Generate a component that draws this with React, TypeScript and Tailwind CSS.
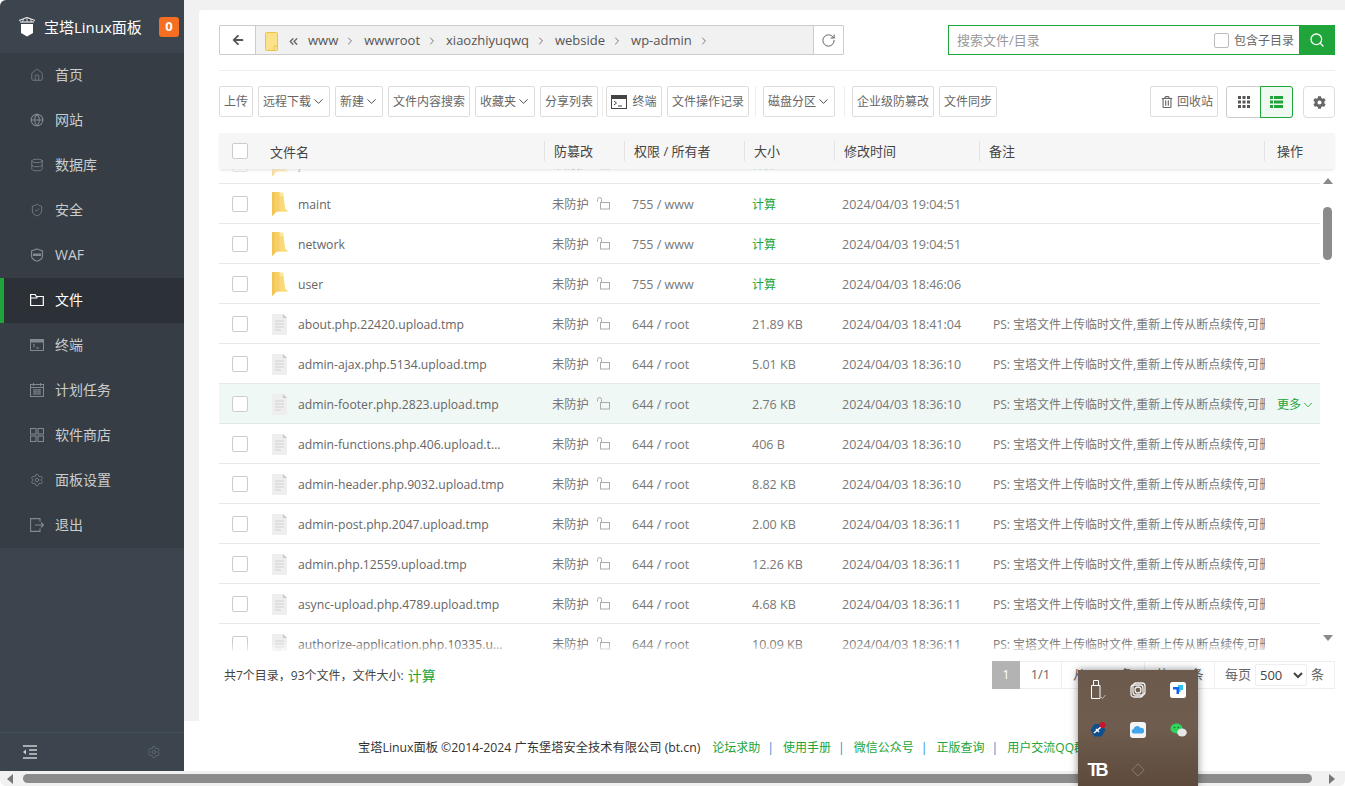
import React from "react";
import { ChevronDown, ChevronRight, ChevronsLeft, RotateCw, Search, Settings, House, Database, ShieldCheck, Globe } from "lucide-react";
import { FaArrowLeft, FaCog, FaRegTrashAlt } from "react-icons/fa";

const FONT = "font-['Open_Sans','Noto_Sans_CJK_SC',sans-serif]";

function FolderIcon({ className = "" }: { className?: string }) {
  return (
    <svg viewBox="0 0 16 24" className={className}>
      <path d="M6 0.500h4.500l1 1.500 1.500 14.500 3 3H4V2z" fill="#fde596" />
      <path d="M6 4l5 0 2 12.500 3 3H6z" fill="#fad97c" />
      <path d="M0 0h7.500v19.500H5L0 24z" fill="#f6cf68" />
      <path d="M0 0h2.500v21.500L0 24z" fill="#f1c555" />
    </svg>
  );
}

function FileIcon({ className = "" }: { className?: string }) {
  return (
    <svg viewBox="0 0 15 21" className={className}>
      <path d="M0 0h11l4 4v17H0z" fill="#eeeeee" />
      <path d="M11 0l4 4h-4z" fill="#c8c8c8" />
      <path d="M3 7h9M3 10h9M3 13h9M3 16h6" stroke="#d2d2d2" strokeWidth="1" />
    </svg>
  );
}

function LockOpen() {
  return (
    <svg viewBox="0 0 13 13" className="w-[13px] h-[13px]" fill="none" stroke="#aaa" strokeWidth="1">
      <rect x="3.500" y="5.500" width="9" height="6.500" />
      <path d="M0.500 4.500V2.500a2 2 0 0 1 4 0V5.500" />
    </svg>
  );
}

function Check({ cls = "" }: { cls?: string }) {
  return <span className={`block w-4 h-4 border border-[#ccc] rounded-[2px] bg-white ${cls}`} />;
}

const ICN = { width: 14, height: 14, strokeWidth: 1.3 };

const MenuIcons: Record<string, React.ReactNode> = {
  home: <House {...ICN} />,
  web: <Globe width={14} height={14} strokeWidth={1.8} />,
  db: <Database {...ICN} />,
  sec: <ShieldCheck {...ICN} />,
  waf: (
    <svg viewBox="0 0 14 14" width="14" height="14" fill="none" stroke="currentColor" strokeWidth="1.200">
      <path d="M7 1l5.500 2v5c0 2.500-2.500 4.200-5.500 5.200C4 12.200 1.500 10.500 1.500 8V3z" />
      <path d="M3.500 6h7v1.500h-7z" fill="currentColor" />
    </svg>
  ),
  file: (
    <svg viewBox="0 0 14 14" width="14" height="14" fill="none" stroke="currentColor" strokeWidth="1.200">
      <path d="M.6 12.500V1.500h4.500l1.200 2h7v9z" />
      <path d="M.6 5h6l1-1.500" />
    </svg>
  ),
  term: (
    <svg viewBox="0 0 14 14" width="14" height="14" fill="none" stroke="currentColor" strokeWidth="1">
      <rect x=".5" y="1.500" width="13" height="11" />
      <path d="M.5 1.500h13v2.500H.5z" fill="currentColor" />
      <path d="M3 6l2 1.500L3 9M6 10h3" />
    </svg>
  ),
  cron: (
    <svg viewBox="0 0 14 14" width="14" height="14" fill="none" stroke="currentColor" strokeWidth="1">
      <rect x=".5" y="1.500" width="13" height="12" />
      <path d="M3.500 0v3M10.500 0v3M.5 4.500h13M3 7h8M3 9h8M3 11h8" />
      <path d="M5 6v6M9 6v6" strokeDasharray="1 1" />
    </svg>
  ),
  soft: (
    <svg viewBox="0 0 14 14" width="14" height="14" fill="none" stroke="currentColor" strokeWidth="1.100">
      <rect x=".5" y=".5" width="5.500" height="5.500" />
      <rect x="8" y=".5" width="5.500" height="5.500" />
      <rect x=".5" y="8" width="5.500" height="5.500" />
      <rect x="8" y="8" width="5.500" height="5.500" />
    </svg>
  ),
  conf: <Settings {...ICN} />,
  exit: (
    <svg viewBox="0 0 14 14" width="14" height="14" fill="none" stroke="currentColor" strokeWidth="1.100">
      <path d="M10 3.500V.6H.6v12.800H10v-2.900" />
      <path d="M5 7h8.500M11 4.500L13.500 7 11 9.500" />
    </svg>
  ),
};

const MENU = [
  ["home", "首页"],
  ["web", "网站"],
  ["db", "数据库"],
  ["sec", "安全"],
  ["waf", "WAF"],
  ["file", "文件"],
  ["term", "终端"],
  ["cron", "计划任务"],
  ["soft", "软件商店"],
  ["conf", "面板设置"],
  ["exit", "退出"],
];

function Sidebar() {
  return (
    <aside className="w-[184px] shrink-0 h-full bg-[#3c444d] flex flex-col rounded-tl-[6px]">
      <div className="h-[53px] flex items-center pl-[18px] pr-[5px]">
        <svg viewBox="0 0 18 20" className="w-[18px] h-[20px] shrink-0">
          <path d="M1 3.500L9 .5l8 3" fill="none" stroke="#e8e8e8" strokeWidth="1.200" />
          <path d="M5.500 2l-1 3M9 1v4M12.500 2l1 3" stroke="#d0d0d0" strokeWidth="1" />
          <path d="M2 5h14" stroke="#e8e8e8" strokeWidth="1.200" />
          <path d="M3 7h12v9l-6 3.500L3 16z" fill="#ffffff" />
        </svg>
        <span className="ml-2 text-[15px] leading-5 text-white whitespace-nowrap">宝塔Linux面板</span>
        <span className="ml-auto w-5 h-5 rounded-[3px] bg-[#f56e21] text-white font-bold text-[13px] flex items-center justify-center">0</span>
      </div>
      <nav className="bg-[#363d44]">
        {MENU.map(([k, label]) => {
          const on = k === "file";
          return (
            <div key={k} className={`h-[45px] pb-[2px] flex items-center text-[14px] ${on ? "bg-[#2c3138] border-l-4 border-[#20a53a] pl-[26px] text-white" : "pl-[30px] text-[#c9cdd0]"}`}>
              <span className={`w-[14px] h-[14px] flex items-center justify-center ${on ? "text-white" : "text-[#828a90]"}`}>{MenuIcons[k]}</span>
              <span className="ml-[11px]">{label}</span>
            </div>
          );
        })}
      </nav>
      <div className="mt-auto h-[39px] border-t border-[#46505a] flex items-center justify-between pl-[23px] pr-[23px]">
        <svg viewBox="0 0 14 14" width="14" height="14" fill="none" stroke="#c9cdd0" strokeWidth="1.300">
          <path d="M0 1h14M6 5h8M6 9h8M0 13h14" />
          <path d="M0 7l3-2.500v5z" fill="#c9cdd0" stroke="none" />
        </svg>
        <Settings width={14} height={14} strokeWidth={1.2} className="text-[#69727a]" />
      </div>
    </aside>
  );
}

function PathBar() {
  const parts = ["www", "wwwroot", "xiaozhiyuqwq", "webside", "wp-admin"];
  return (
    <div className="w-[625px] h-[30px] border border-[#ccc] flex rounded-[1px] bg-white">
      <div className="w-[36px] flex items-center justify-center border-r border-[#ccc]">
        <FaArrowLeft size={12} className="text-[#555]" />
      </div>
      <div className="flex-1 bg-[#f1f1f1] flex items-center pl-[9px] pt-[2px] text-[13px] text-[#555]">
        <svg viewBox="0 0 13 19" className="w-[13px] h-[19px] shrink-0">
          <rect x=".5" y=".5" width="12" height="18" rx="1" fill="#fde08a" stroke="#eec14f" />
          <path d="M9 18v-4h3.500" fill="none" stroke="#eec14f" />
        </svg>
        <ChevronsLeft width={13} height={13} strokeWidth={2.500} className="ml-[9px] text-[#666]" />
        {parts.map((p) => (
          <React.Fragment key={p}>
            <span className="ml-[8px]">{p}</span>
            <ChevronRight width={12} height={12} strokeWidth={2} className="ml-[6px] text-[#777]" />
          </React.Fragment>
        ))}
      </div>
      <div className="w-[30px] flex items-center justify-center border-l border-[#ccc]">
        <RotateCw width={15} height={15} strokeWidth={1.500} className="text-[#555]" />
      </div>
    </div>
  );
}

function SearchBox() {
  return (
    <div className="w-[387px] h-[30px] border border-[#20a53a] flex items-center">
      <span className="ml-2 pt-[2px] text-[13px] text-[#999]">搜索文件/目录</span>
      <span className="ml-auto block w-[15px] h-[15px] border border-[#bbb] rounded-[2px]" />
      <span className="ml-[5px] pt-px text-[12px] text-[#666] whitespace-nowrap">包含子目录</span>
      <span className="ml-[5px] w-[36px] h-[30px] -mr-px bg-[#20a53a] flex items-center justify-center">
        <Search width={16} height={16} strokeWidth={2} className="text-white" />
      </span>
    </div>
  );
}

function Btn({ children, w, caret, cls = "" }: { children: React.ReactNode; w: string; caret?: boolean; cls?: string }) {
  return (
    <span className={`h-[31px] ${w} shrink-0 border border-[#ddd] rounded-[2px] flex items-center justify-center text-[12px] text-[#666] whitespace-nowrap bg-white ${cls}`}>
      {children}
      {caret && <ChevronDown width={15} height={15} strokeWidth={1.500} className="text-[#444] -mr-px" />}
    </span>
  );
}

function Toolbar() {
  return (
    <div className="mt-[15px] h-[32px] flex items-start">
      <div className="flex gap-[5px]">
        <Btn w="w-[34px]">上传</Btn>
        <Btn w="w-[72px]" caret>远程下载</Btn>
        <Btn w="w-[48px]" caret>新建</Btn>
        <Btn w="w-[82px]">文件内容搜索</Btn>
        <Btn w="w-[60px]" caret>收藏夹</Btn>
        <Btn w="w-[58px]">分享列表</Btn>
      </div>
      <span className="w-px h-[31px] bg-[#eee] mx-[3.500px]" />
      <Btn w="w-[56px]">
        <svg viewBox="0 0 16 14" className="w-4 h-[14px] mr-[5px]" fill="none" stroke="#444" strokeWidth="1">
          <rect x=".5" y=".5" width="15" height="13" />
          <path d="M.5 .5h15v3H.5z" fill="#444" />
          <path d="M3 6l2.500 2L3 10M7 11h4" />
        </svg>
        终端
      </Btn>
      <Btn w="w-[82px]" cls="ml-[5px]">文件操作记录</Btn>
      <span className="w-px h-[31px] bg-[#eee] ml-[5.500px] mr-[7.500px]" />
      <Btn w="w-[72px]" caret>磁盘分区</Btn>
      <span className="w-px h-[31px] bg-[#eee] ml-[8.500px] mr-[7.500px]" />
      <Btn w="w-[82px]">企业级防篡改</Btn>
      <Btn w="w-[58px]" cls="ml-[5px]">文件同步</Btn>

      <span className="ml-auto h-[31px] w-[68px] border border-[#ddd] rounded-[2px] flex items-center pl-[10px] text-[12px] text-[#666] whitespace-nowrap">
        <FaRegTrashAlt size={12} className="mr-[4px] text-[#666]" />
        回收站
      </span>
      <div className="ml-2 w-[67px] h-[32px] flex border border-[#ccc] rounded-[3px] bg-white">
        <span className="w-[33px] flex items-center justify-center">
          <svg viewBox="0 0 12 12" width="12" height="12" fill="#555">
            {[0, 4.5, 9].flatMap((x) => [0, 4.5, 9].map((y) => <rect key={`${x}-${y}`} x={x} y={y} width="3" height="3" />))}
          </svg>
        </span>
        <span className="flex-1 -my-px -mr-px flex items-center justify-center border border-[#20a53a] rounded-r-[3px] bg-[#f0f8f2]">
          <svg viewBox="0 0 13 12" width="13" height="12" fill="#20a53a">
            {[0, 4.5, 9].map((y) => (
              <React.Fragment key={y}>
                <rect x="0" y={y} width="3" height="3" />
                <rect x="4" y={y} width="9" height="3" />
              </React.Fragment>
            ))}
          </svg>
        </span>
      </div>
      <span className="ml-[10px] w-[32px] h-[32px] border border-[#ddd] rounded-[4px] flex items-center justify-center">
        <FaCog size={13} className="text-[#666]" />
      </span>
    </div>
  );
}

const HEAD = ["防篡改", "权限 / 所有者", "大小", "修改时间", "备注"];

function TableHead() {
  return (
    <div className="relative z-10 mt-[15px] h-[36px] bg-[#f6f6f6] grid grid-cols-[325px_80px_120px_90px_145px_285px_71px] items-center text-[13px] text-[#444] shadow-[0_2px_3px_-1px_rgba(0,0,0,0.12)]">
      <div className="flex items-center pl-[13px]">
        <Check />
        <span className="ml-[22px] h-5 pt-[1px] leading-5">文件名</span>
      </div>
      {HEAD.map((t) => (
        <div key={t} className="h-5 border-l border-[#e3e3e3] pl-[9px] leading-5 whitespace-nowrap">{t}</div>
      ))}
      <div className="h-5 border-l border-[#e3e3e3] pl-[12px] leading-5">操作</div>
    </div>
  );
}

const NOTE = "PS: 宝塔文件上传临时文件,重新上传从断点续传,可删除";
type Row = { n: string; dir?: boolean; p: string; s: string; t: string; hover?: boolean };
const ROWS: Row[] = [
  { n: "js", dir: true, p: "755 / www", s: "计算", t: "2024/04/03 19:04:51" },
  { n: "maint", dir: true, p: "755 / www", s: "计算", t: "2024/04/03 19:04:51" },
  { n: "network", dir: true, p: "755 / www", s: "计算", t: "2024/04/03 19:04:51" },
  { n: "user", dir: true, p: "755 / www", s: "计算", t: "2024/04/03 18:46:06" },
  { n: "about.php.22420.upload.tmp", p: "644 / root", s: "21.89 KB", t: "2024/04/03 18:41:04" },
  { n: "admin-ajax.php.5134.upload.tmp", p: "644 / root", s: "5.01 KB", t: "2024/04/03 18:36:10" },
  { n: "admin-footer.php.2823.upload.tmp", p: "644 / root", s: "2.76 KB", t: "2024/04/03 18:36:10", hover: true },
  { n: "admin-functions.php.406.upload.tmp", p: "644 / root", s: "406 B", t: "2024/04/03 18:36:10" },
  { n: "admin-header.php.9032.upload.tmp", p: "644 / root", s: "8.82 KB", t: "2024/04/03 18:36:10" },
  { n: "admin-post.php.2047.upload.tmp", p: "644 / root", s: "2.00 KB", t: "2024/04/03 18:36:11" },
  { n: "admin.php.12559.upload.tmp", p: "644 / root", s: "12.26 KB", t: "2024/04/03 18:36:11" },
  { n: "async-upload.php.4789.upload.tmp", p: "644 / root", s: "4.68 KB", t: "2024/04/03 18:36:11" },
  { n: "authorize-application.php.10335.upload.tmp", p: "644 / root", s: "10.09 KB", t: "2024/04/03 18:36:11" },
];

function FileRow({ r }: { r: Row }) {
  return (
    <div className={`h-[40px] pt-px grid grid-cols-[53px_26px_254px_80px_120px_90px_151px_272px_55px] items-center border-b text-[12.5px] text-[#777] ${r.hover ? "bg-[#eff8f5] border-[#dcebe6]" : "border-[#e8e8e8]"}`}>
      <div className="pl-[13px]"><Check /></div>
      <div>{r.dir ? <FolderIcon className="w-4 h-6" /> : <FileIcon className="w-[15px] h-[21px]" />}</div>
      <div className="w-[209px] pt-[2px] truncate text-[12.2px] text-[#666]">{r.n}</div>
      <div className="flex items-center">
        <span className="pt-[2px] text-[12.25px]">未防护</span>
        <span className="ml-[8px] -mt-px"><LockOpen /></span>
      </div>
      <div className="pt-[2px]">{r.p}</div>
      <div className={r.dir ? "pt-[2px] text-[12px] text-[#20a53a]" : "pt-[2px]"}>{r.s}</div>
      <div className="pt-[2px]">{r.t}</div>
      <div className="pt-[2px] pr-1 overflow-hidden whitespace-nowrap text-[12px]">{r.dir ? "" : NOTE}</div>
      <div className="pt-[2px] pl-[12px] text-[12px] text-[#20a53a] flex items-center whitespace-nowrap">
        {r.hover && (
          <>
            更多
            <ChevronDown width={14} height={14} strokeWidth={1.500} />
          </>
        )}
      </div>
    </div>
  );
}

function ScrollRail() {
  return (
    <div className="w-[15px] shrink-0 flex flex-col items-center">
      <span className="mt-[9px] w-0 h-0 border-x-[5px] border-x-transparent border-b-[6px] border-b-[#8a8a8a]" />
      <span className="mt-[23px] w-[9px] h-[53px] rounded-full bg-[#8b8b8b]" />
      <span className="mt-auto mb-[10px] w-0 h-0 border-x-[5px] border-x-transparent border-t-[6px] border-t-[#8a8a8a]" />
    </div>
  );
}

function FileList() {
  return (
    <div className="relative h-[482px] flex overflow-hidden">
      <div className="w-[1101px] overflow-hidden">
        <div className="-mt-[25px]">
          {ROWS.map((r) => <FileRow key={r.n} r={r} />)}
        </div>
      </div>
      <ScrollRail />
      <div className="absolute left-0 right-0 top-0 h-[10px] bg-gradient-to-b from-white/70 to-transparent" />
      <div className="absolute left-0 right-0 bottom-0 h-[8px] bg-gradient-to-t from-white/70 to-transparent" />
    </div>
  );
}

function Pager() {
  return (
    <div className="mt-[10px] flex items-start justify-between pl-[5px]">
      <div className="h-[28px] mt-px flex items-center text-[12px] text-[#444]">
        <span className="leading-[18px]">共7个目录，93个文件，文件大小:</span>
        <span className="ml-1 text-[14px] leading-[18px] text-[#20a53a]">计算</span>
      </div>
      <div className="h-[28px] flex border border-[#eee] text-[13px] text-[#666]">
        <span className="w-[28px] -my-px -ml-px bg-[#b3b3b3] text-white flex items-center justify-center">1</span>
        <span className="w-[42px] flex items-center justify-center border-r border-[#eee]">1/1</span>
        <span className="w-[83px] flex items-center justify-center border-r border-[#eee] whitespace-nowrap">从1-100条</span>
        <span className="w-[70px] flex items-center justify-center border-r border-[#eee] whitespace-nowrap">共100条</span>
        <span className="w-[119px] flex items-center justify-center whitespace-nowrap">
          每页
          <select defaultValue="500" className="mx-1 w-[52px] h-[22px] border border-[#eee] rounded-[2px] bg-white text-[13px] text-[#444]">
            <option value="500">500</option>
          </select>
          条
        </span>
      </div>
    </div>
  );
}

function Footer() {
  const links = ["论坛求助", "使用手册", "微信公众号", "正版查询", "用户交流QQ群"];
  return (
    <footer className="h-[50px] bg-white pl-[174px] flex items-start pt-[18px] text-[12.25px] leading-[18px] text-[#333] whitespace-nowrap">
      <span>宝塔Linux面板 ©2014-2024 广东堡塔安全技术有限公司 (bt.cn)</span>
      {links.map((l, i) => (
        <React.Fragment key={l}>
          <span className={i === 0 ? "ml-[12px] text-[12px] text-[#20a53a]" : "ml-[9px] text-[12px] text-[#20a53a]"}>{l}</span>
          {i < links.length - 1 && <span className="ml-[7px] text-[#2b8fd8]">|</span>}
        </React.Fragment>
      ))}
    </footer>
  );
}

function Tray() {
  return (
    <div className="absolute left-[1078px] top-[670px] w-[120px] h-[116px] bg-gradient-to-b from-[#6c5a4c] via-[#6e5c4e] to-[#5d4a3c] shadow-[0_0_8px_rgba(0,0,0,0.45)] grid grid-cols-3 auto-rows-[40px]">
      <div className="flex items-center justify-center">
        <svg viewBox="0 0 16 20" width="16" height="20" fill="none" stroke="#fff" strokeWidth="1">
          <path d="M3.500.5h5v5h-5zM1.500 5.500h8.500v13h-8.500z" />
          <path d="M11 17l1.500 1.500L15.500 15" stroke="#bbb" />
        </svg>
      </div>
      <div className="flex items-center justify-center">
        <svg viewBox="0 0 16 16" width="16" height="16" fill="none" stroke="#f2f2f2" strokeWidth="1.300">
          <rect x="3" y="1" width="12" height="12" rx="3" />
          <rect x="1" y="3" width="12" height="12" rx="3" />
          <circle cx="8" cy="8" r="3" />
        </svg>
      </div>
      <div className="flex items-center justify-center">
        <svg viewBox="0 0 16 16" width="16" height="16">
          <rect width="16" height="16" rx="2.500" fill="#fff" />
          <path d="M3 5h6v7H6.500V7.500H3z" fill="#1463ee" />
          <path d="M8 3h5v5h-2.500v2H9V5H8z" fill="#2cc4ee" />
        </svg>
      </div>
      <div className="flex items-center justify-center">
        <svg viewBox="0 0 16 16" width="16" height="16">
          <path d="M4.500 2h7L15.500 8l-4 6.500h-7L.5 8z" fill="#0e4f8f" />
          <path d="M4 11L11 5M6 7l3 3" stroke="#fff" strokeWidth="1.600" />
          <circle cx="12.500" cy="3" r="3" fill="#c9142c" />
        </svg>
      </div>
      <div className="flex items-center justify-center">
        <svg viewBox="0 0 16 16" width="16" height="16">
          <rect width="16" height="16" rx="3" fill="#f4f4f4" />
          <path d="M3.500 11.500a2.300 2.300 0 0 1 0-4.500 3.800 3.800 0 0 1 7-1 2.800 2.800 0 0 1 1.500 5.500z" fill="#3fa5ec" />
        </svg>
      </div>
      <div className="flex items-center justify-center">
        <svg viewBox="0 0 17 14" width="17" height="14">
          <ellipse cx="6.500" cy="5.500" rx="6" ry="5" fill="#2fd45a" />
          <ellipse cx="12" cy="9.500" rx="4.800" ry="4" fill="#e6e6e6" />
          <circle cx="4.500" cy="4.500" r=".8" fill="#0e6e2c" />
          <circle cx="8.500" cy="4.500" r=".8" fill="#0e6e2c" />
        </svg>
      </div>
      <div className="flex items-center justify-center">
        <span className="text-[18px] font-bold leading-none text-white font-['Liberation_Sans',sans-serif] tracking-[-3px] pr-[3px]">TB</span>
      </div>
      <div className="flex items-center justify-center">
        <svg viewBox="0 0 14 14" width="14" height="14" fill="none" stroke="#897a6c" strokeWidth="1">
          <path d="M7 .8L13.200 7 7 13.200.8 7z" />
        </svg>
      </div>
    </div>
  );
}

function BottomScroll() {
  return (
    <div className="h-[15px] bg-[#f1f1f1] flex items-center rounded-b-[6px]">
      <span className="ml-[7px] w-0 h-0 border-y-[5px] border-y-transparent border-r-[6px] border-r-[#777]" />
      <span className="ml-[10px] w-[1289px] h-[9px] rounded-full bg-[#8b8b8b]" />
      <span className="ml-[17px] w-0 h-0 border-y-[5px] border-y-transparent border-l-[6px] border-l-[#777]" />
    </div>
  );
}

export default function App() {
  return (
    <div className={`relative w-[1345px] h-[786px] overflow-hidden bg-white ${FONT}`}>
      <div className="h-[771px] flex">
        <Sidebar />
        <main className="flex-1 min-w-0 flex flex-col">
          <div className="h-[721px] bg-[#f1f1f1] pl-[15px] pt-[10px]">
            <div className="h-[711px] bg-white rounded-tl-[3px] pl-[20px] pr-[10px] pt-[15px]">
              <div className="flex justify-between">
                <PathBar />
                <SearchBox />
              </div>
              <div className="mt-[15px] border-t border-[#eee]" />
              <Toolbar />
              <TableHead />
              <FileList />
              <Pager />
            </div>
          </div>
          <Footer />
        </main>
      </div>
      <BottomScroll />
      <Tray />
    </div>
  );
}
